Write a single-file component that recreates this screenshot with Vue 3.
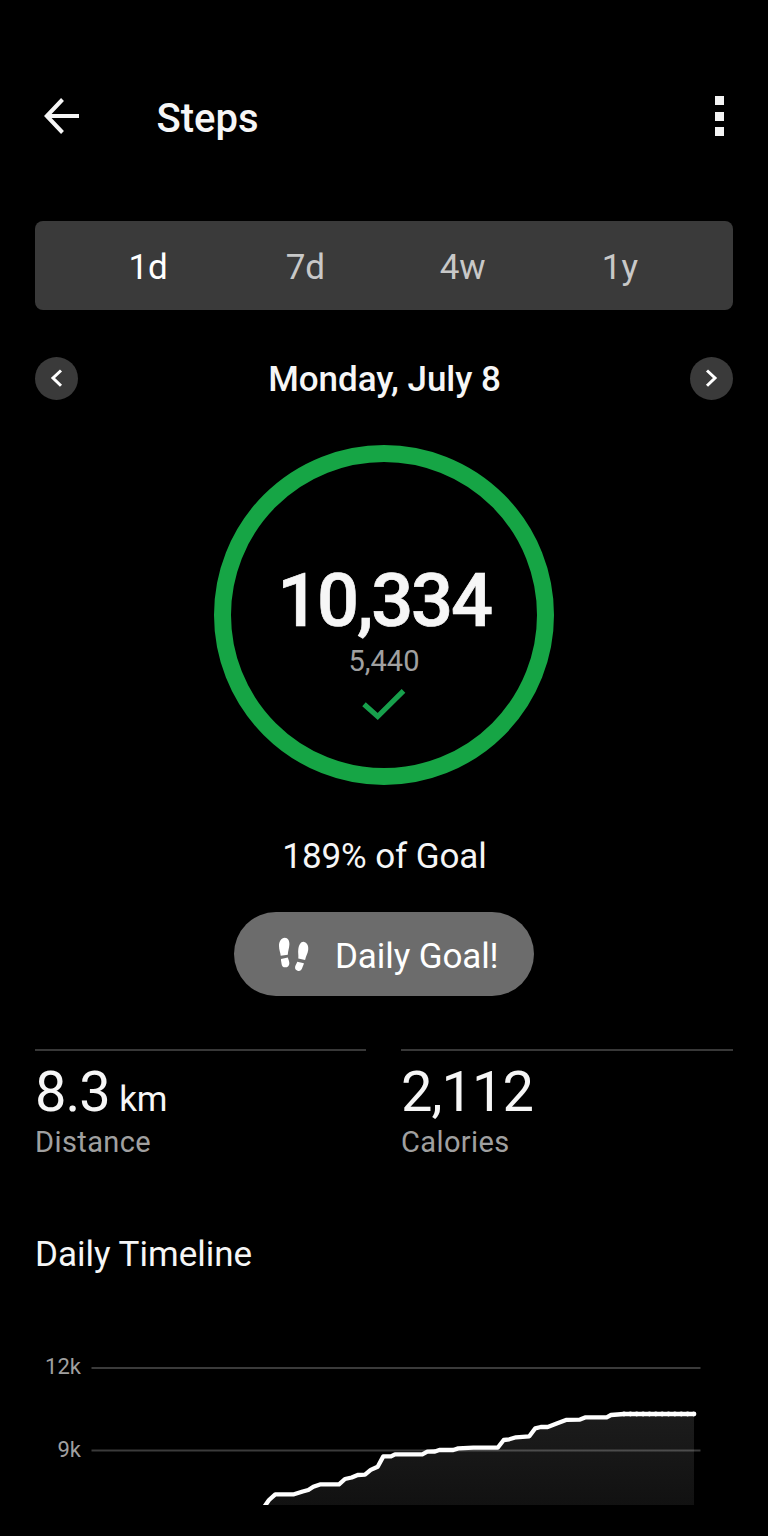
<script setup>
const tabs = ['1d', '7d', '4w', '1y']
const activeTab = '1d'

const points = [
  [264.5, 166.5], [269, 160], [275.3, 154.3], [294, 154.3], [302.7, 151.5], [308.3, 150], [313.3, 146.8],
  [320, 144.4], [339, 144.4], [345, 139], [351.7, 137.5], [357.7, 135], [365, 134.7], [370.7, 129.9],
  [377.7, 126.7], [383.3, 116.4], [391, 116.4], [395, 114.3], [422.3, 114.3], [427.3, 111.7],
  [435, 111.5], [439.3, 110], [453.3, 110], [458.3, 108.4], [473.3, 107.7], [497.7, 107.7],
  [503.7, 100], [509.3, 99.3], [516, 97.3], [529.3, 96.3], [535.3, 88.3], [540.7, 87],
  [547.7, 87], [556.7, 83.6], [566.7, 79.8], [580, 79.6], [585.7, 77.3], [606.7, 77.3],
  [611, 75], [624, 74], [694, 74]
]
const line = points.map((p) => p.join(',')).join(' ')
const area = `${line} 694,166 264.5,166`
const samples = Array.from({ length: 12 }, (_, i) => 624 + i * 6.36)
</script>

<template>
  <main class="screen">
    <header class="bar">
      <svg class="back" width="36" height="36" viewBox="0 0 36 36">
        <path d="M18.500 1.500 2.800 18l15.700 16.500M2.800 18H35" fill="none" stroke="#f6f6f6" stroke-width="4" />
      </svg>
      <h1>Steps</h1>
      <span class="more"><i></i><i></i><i></i></span>
    </header>

    <nav class="tabs">
      <span v-for="t in tabs" :key="t" class="tab" :class="{ active: t === activeTab }">{{ t }}</span>
    </nav>

    <section class="date-row">
      <span class="round">
        <svg width="42" height="42" viewBox="0 0 42 42"><path d="M26 13.500 18 21l8 7.800" /></svg>
      </span>
      <h2>Monday, July 8</h2>
      <span class="round">
        <svg width="42" height="42" viewBox="0 0 42 42"><path d="M17 13.500l8 7.500-8 7.800" /></svg>
      </span>
    </section>

    <section class="ring">
      <div class="count">10,334</div>
      <div class="target">5,440</div>
      <svg class="check" width="44" height="34" viewBox="0 0 44 34">
        <path d="M2 16.200 15.700 28.500 41.500 2.900" fill="none" stroke="#17a04c" stroke-width="5.200" />
      </svg>
    </section>

    <p class="percent">189% of Goal</p>

    <div class="badge">
      <svg width="32" height="36" viewBox="0 0 32 36" fill="#fff">
        <path d="M6.800.8C10 .8 11.600 4 11.400 7.500c-.2 4-1.500 6.500-1.600 10.300L2.700 18.800C2.500 15.500 1 13 1 9 1 4.500 3.200.8 6.800.8Z" />
        <path d="M3 21.900l6.800-1.300c.8 2.300 1.700 4 1.500 6.300-.2 2-1.900 3.400-4 3.400-2.300 0-3.600-1.500-3.700-3.400C3.500 25.200 2.800 23.800 3 21.900Z" />
        <path d="M26 4.900c3.200.6 4.700 3.800 4.200 8-.5 3.900-2.500 6.300-3.100 10.100l-6.800-1.600c.4-3.600-.5-5.600 0-9.100.6-4.400 2.700-8 5.700-7.400Z" />
        <path d="M19.300 24.700l6.600 1.500c-.2 1.700-1.200 3-1.600 4.600-.6 2.200-2.100 3.500-4.200 3.100-2.200-.5-3.400-2.200-3-4.200.4-1.900 1.600-3.100 2.200-5Z" />
      </svg>
      <span>Daily Goal!</span>
    </div>

    <section class="stats">
      <div class="stat">
        <div class="value">8.3<span class="unit">km</span></div>
        <div class="label">Distance</div>
      </div>
      <div class="stat">
        <div class="value">2,112</div>
        <div class="label">Calories</div>
      </div>
    </section>

    <h3>Daily Timeline</h3>

    <svg class="chart" width="768" height="165" viewBox="0 0 768 165">
      <defs>
        <linearGradient id="fade" x1="0" y1="0" x2="0" y2="1">
          <stop offset="0" stop-color="#1c1c1c" />
          <stop offset="1" stop-color="#111" />
        </linearGradient>
      </defs>
      <polygon :points="area" fill="url(#fade)" />
      <g stroke="#fff" stroke-opacity=".23" stroke-width="2">
        <path d="M91.500 28H700.500M91.500 110.500H700.500" />
      </g>
      <polyline :points="line" fill="none" stroke="#fff" stroke-width="4.300" stroke-linejoin="round" />
      <circle v-for="x in samples" :key="x" :cx="x" cy="74" r="2.400" fill="#fff" />
      <text x="81" y="34" text-anchor="end">12k</text>
      <text x="81" y="117" text-anchor="end">9k</text>
    </svg>
  </main>
</template>

<style>
body {
  margin: 0;
  background: #000;
}
</style>

<style scoped>
.screen {
  box-sizing: border-box;
  display: flex;
  flex-direction: column;
  width: 768px;
  height: 1536px;
  overflow: hidden;
  background: #000;
  color: #f6f6f6;
  font-family: Roboto, "Liberation Sans", sans-serif;
  font-size: 35px;
}
h1, h2, h3, p {
  margin: 0;
  font-size: 35px;
  font-weight: 400;
}
.bar {
  display: flex;
  align-items: center;
  height: 40px;
  margin: 96px 44px 0;
}
.back {
  display: block;
}
h1 {
  margin-left: 76.500px;
  padding-top: 5px;
  font-size: 40px;
  font-weight: 500;
  line-height: 40px;
}
.more {
  display: flex;
  flex-direction: column;
  justify-content: space-between;
  height: 40px;
  margin-left: auto;
}
.more i {
  width: 9px;
  height: 9px;
  background: #f4f4f4;
}
.tabs {
  box-sizing: border-box;
  display: flex;
  height: 89.500px;
  margin: 84.500px 35px 0;
  padding: 2.500px 34.500px 0;
  border-radius: 8px;
  background: #3a3a3a;
  line-height: 90px;
}
.tab {
  flex: 1;
  text-align: center;
  color: #c8c8c8;
}
.tab.active {
  color: #fff;
}
.date-row {
  display: flex;
  align-items: center;
  justify-content: space-between;
  height: 43px;
  margin: 47px 35px 0;
}
.round {
  width: 43px;
  height: 43px;
  border-radius: 50%;
  background: #3a3a3a;
}
.round path {
  fill: none;
  stroke: #fff;
  stroke-width: 3;
}
h2 {
  padding: 1px 0 0 1px;
  font-weight: 500;
  line-height: 43px;
  letter-spacing: -0.050px;
}
.ring {
  box-sizing: border-box;
  display: flex;
  flex-direction: column;
  align-items: center;
  width: 340px;
  height: 340px;
  margin: 45px auto 0;
  padding-top: 99px;
  border: 17.500px solid #16a545;
  border-radius: 50%;
}
.count {
  font-size: 74px;
  font-weight: 500;
  line-height: 80px;
  letter-spacing: -2.200px;
  -webkit-text-stroke: 0.700px #f6f6f6;
}
.target {
  font-size: 29px;
  line-height: 40px;
  color: #a0a0a0;
}
.check {
  margin-top: 7px;
}
.percent {
  margin-top: 51px;
  padding-left: 1px;
  line-height: 42px;
  letter-spacing: -0.100px;
  text-align: center;
}
.badge {
  box-sizing: border-box;
  display: flex;
  align-items: center;
  align-self: center;
  gap: 25.500px;
  width: 300px;
  height: 84px;
  margin-top: 34px;
  padding: 2px 0 0 43.500px;
  border-radius: 42px;
  background: #6c6c6c;
  color: #fff;
  letter-spacing: -0.100px;
  white-space: nowrap;
}
.badge span {
  padding-top: 3px;
}
.stats {
  display: grid;
  grid-template-columns: 331px 332px;
  gap: 35px;
  margin: 53px 35px 0;
}
.stat {
  border-top: 2px solid #383838;
}
.value {
  height: 62px;
  padding-top: 10px;
  font-size: 56px;
  line-height: 62px;
  letter-spacing: -1px;
}
.unit {
  margin-left: 9.500px;
  font-size: 35px;
  letter-spacing: -0.300px;
}
.label {
  font-size: 29px;
  line-height: 38px;
  letter-spacing: 0.400px;
  color: #a0a0a0;
}
h3 {
  margin: 73px 35px 0;
  line-height: 42px;
}
.chart {
  margin-top: 64px;
}
.chart text {
  font-size: 22px;
  fill: #a0a0a0;
}
</style>
